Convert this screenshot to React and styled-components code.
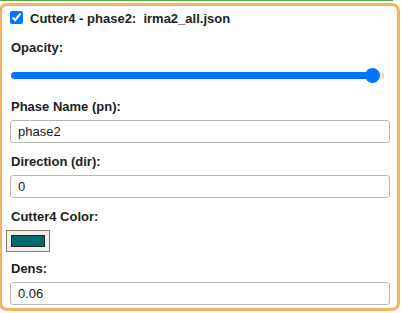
import { useState } from "react";
import styled, { createGlobalStyle } from "styled-components";

const GlobalStyle = createGlobalStyle`
    body {
        margin: 0;
        background: #ffffff;
        font-family: "Liberation Sans", Arial, sans-serif;
    }
`;

const Page = styled.div`
    width: 393px;
    border-top: 1px solid #52a83a;
`;

const Panel = styled.div`
    box-sizing: border-box;
    width: 401px;
    margin: 2px 0 0 -1px;
    padding: 5px 7px 3px 8px;
    border: 3px solid #f7b25e;
    border-radius: 8px;
    display: flex;
    flex-direction: column;
`;

const Title = styled.label`
    display: flex;
    align-items: flex-start;
    gap: 7px;
    font-size: 13px;
    line-height: 16px;
    font-weight: bold;
    color: #222;
    margin-bottom: 12px;
`;

const Check = styled.input`
    width: 13px;
    height: 13px;
    margin: 0;
    accent-color: #0075ff;
`;

const Group = styled.div`
    display: flex;
    flex-direction: column;
    margin-bottom: ${(p) => p.$gap ?? 10}px;
`;

const Label = styled.label`
    font-size: 13px;
    line-height: 16px;
    font-weight: bold;
    color: #222;
    padding: 1px 0 0 1px;
    margin-bottom: ${(p) => p.$gap ?? 5}px;
`;

const TextInput = styled.input`
    box-sizing: border-box;
    width: 380px;
    height: 23px;
    margin: 0;
    padding: 0 7px;
    border: 1px solid #b8b8b8;
    border-radius: 3px;
    font-family: "Liberation Sans", Arial, sans-serif;
    font-size: 13px;
    color: #222;
    background: #fff;
    outline: none;
`;

const Slider = styled.input`
    -webkit-appearance: none;
    appearance: none;
    width: 373px;
    height: 16px;
    margin: 0 0 0 1px;
    background: transparent;

    &::-webkit-slider-runnable-track {
        height: 7px;
        border-radius: 4px;
        background: linear-gradient(to right, #0075ff 0 97%, #efefef 97% 100%);
        box-shadow: inset -1px 0 0 #c8c8c8;
    }
    &::-webkit-slider-thumb {
        -webkit-appearance: none;
        width: 15px;
        height: 15px;
        margin-top: -4px;
        border-radius: 50%;
        background: #0075ff;
        border: none;
    }
`;

const ColorPick = styled.input`
    -webkit-appearance: none;
    appearance: none;
    box-sizing: border-box;
    width: 44px;
    height: 22px;
    margin: 0 0 0 -4px;
    padding: 0;
    border: 1px solid #8c7866;
    background: #efefef;

    &::-webkit-color-swatch-wrapper {
        padding: 4px;
    }
    &::-webkit-color-swatch {
        border: 1px solid #222;
    }
`;

export default function App() {
    const [on, setOn] = useState(true);
    const [opacity, setOpacity] = useState(0.99);
    const [pn, setPn] = useState("phase2");
    const [dir, setDir] = useState("0");
    const [color, setColor] = useState("#006b68");
    const [dens, setDens] = useState("0.06");

    return (
        <Page>
            <GlobalStyle />
            <Panel>
                <Title>
                    <Check type="checkbox" checked={on} onChange={(e) => setOn(e.target.checked)} />
                    <span>Cutter4 - phase2:&nbsp; irma2_all.json</span>
                </Title>
                <Group $gap={15}>
                    <Label $gap={11}>Opacity:</Label>
                    <Slider
                        type="range"
                        min="0"
                        max="1"
                        step="0.01"
                        value={opacity}
                        onChange={(e) => setOpacity(e.target.value)}
                    />
                </Group>
                <Group>
                    <Label>Phase Name (pn):</Label>
                    <TextInput value={pn} onChange={(e) => setPn(e.target.value)} />
                </Group>
                <Group>
                    <Label>Direction (dir):</Label>
                    <TextInput value={dir} onChange={(e) => setDir(e.target.value)} />
                </Group>
                <Group $gap={8}>
                    <Label>Cutter4 Color:</Label>
                    <ColorPick type="color" value={color} onChange={(e) => setColor(e.target.value)} />
                </Group>
                <Group $gap={0}>
                    <Label>Dens:</Label>
                    <TextInput value={dens} onChange={(e) => setDens(e.target.value)} />
                </Group>
            </Panel>
        </Page>
    );
}
